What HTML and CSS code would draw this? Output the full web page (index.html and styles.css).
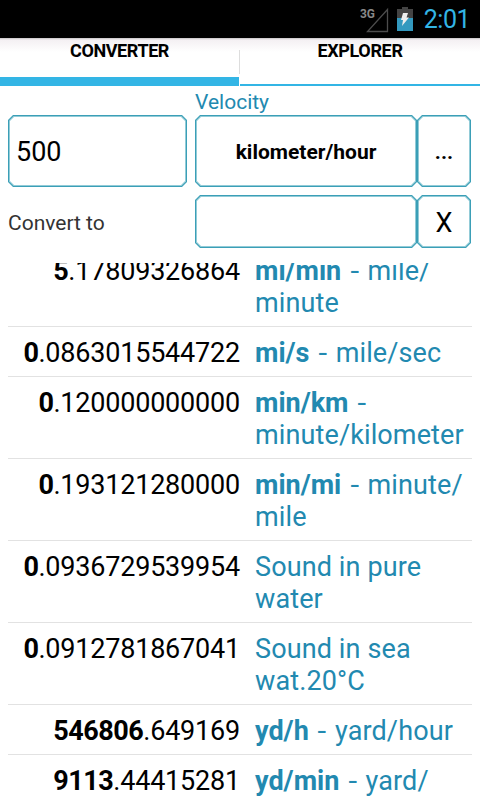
FILE: index.html
```html
<!DOCTYPE html>
<html lang="en"><head><meta charset="utf-8"><title>Converter</title><link rel="stylesheet" href="styles.css"></head>
<body>
<header class="status"><svg class="signal" width="30" height="28" viewBox="0 0 30 28"><path d="M27.5 3.500V25.500H7.500Z" fill="none" stroke="#4d4d4d" stroke-width="1.3"/><text class="network" x="0" y="12" textLength="15" lengthAdjust="spacingAndGlyphs">3G</text></svg>
<svg class="battery" width="16" height="24" viewBox="0 0 16 24"><path d="M5 0h6v2h5v10H0V2h5z" fill="#444"/><path d="M0 11h16v13H0z" fill="#3399bf"/><path d="M6 6h5L9.500 10.500H12L5 19l1-6H4z" fill="#eee"/></svg><span class="clock">2:01</span></header>
<nav class="tabs"><div class="tab active">CONVERTER</div><div class="divider"></div><div class="tab explorer">EXPLORER</div></nav>
<main>
<section class="form"><div class="category">Velocity</div>
<div class="row source"><div class="box amount"><span>500</span></div><div class="box unit"><span>kilometer/hour</span></div><div class="box action"><span>...</span></div></div>
<div class="row target"><div class="caption">Convert to</div><div class="box unit"></div><div class="box action"><span>X</span></div></div></section>
<section class="results">
<div class="result"><div class="value"><b>5</b>.17809326864</div><div class="name"><b>mi/min</b> <i>-</i> mile/<br>minute</div></div>
<div class="result"><div class="value"><b>0</b>.0863015544722</div><div class="name"><b>mi/s</b> <i>-</i> mile/sec</div></div>
<div class="result"><div class="value"><b>0</b>.120000000000</div><div class="name"><b>min/km</b> <i>-</i><br>minute/kilometer</div></div>
<div class="result"><div class="value"><b>0</b>.193121280000</div><div class="name"><b>min/mi</b> <i>-</i> minute/<br>mile</div></div>
<div class="result"><div class="value"><b>0</b>.0936729539954</div><div class="name">Sound in pure<br>water</div></div>
<div class="result"><div class="value"><b>0</b>.0912781867041</div><div class="name">Sound in sea<br>wat.20°C</div></div>
<div class="result"><div class="value"><b>546806</b>.649169</div><div class="name"><b>yd/h</b> <i>-</i> yard/hour</div></div>
<div class="result"><div class="value"><b>9113</b>.44415281</div><div class="name"><b>yd/min</b> <i>-</i> yard/</div></div>
</section></main></body></html>
```
FILE: styles.css
```css
*{box-sizing:border-box}
body{margin:0;width:480px;height:800px;overflow:hidden;background:#fff;color:#000;font-family:Roboto,sans-serif;display:flex;flex-direction:column}
.status{height:38px;flex:none;background:#000;display:flex;align-items:center;justify-content:flex-end;padding-right:10px}
.signal{margin-top:2px}
.network{font:bold 13px Roboto,sans-serif;fill:#888}
.battery{margin:0 11px 0 7px}
.clock{font-size:25px;line-height:38px;color:#33b5e5;letter-spacing:-.5px;padding-top:2px}
.tabs{height:48px;flex:none;display:flex;background:linear-gradient(#c5c2c4,#f4f0f3 2px,#fff 14px)}
.tab{width:239px;text-align:center;font-size:18px;font-weight:700;line-height:26px;letter-spacing:-.4px;border-bottom:2px solid #33b5e5}
.active{border-bottom-width:9px}
.explorer{width:240px;letter-spacing:-.35px}
.divider{width:1px;height:24px;margin-top:12px;background:#ddd}
main{flex:1;min-height:0;display:flex;flex-direction:column}
.form{height:177px;flex:none;padding:0 9px 0 8px}
.category{height:29px;margin-left:187px;font-size:21px;line-height:32px;color:#2289b0}
.row{display:flex}
.source{height:72px}
.target{height:53px;margin-top:8px}
.box,.box::before,.box::after{--cut:5px;clip-path:polygon(var(--cut) 0,calc(100% - var(--cut)) 0,100% var(--cut),100% calc(100% - var(--cut)),calc(100% - var(--cut)) 100%,var(--cut) 100%,0 calc(100% - var(--cut)),0 var(--cut))}
.box{position:relative;background:#3b9fb7;display:flex;align-items:center;justify-content:center}
.box::before,.box::after{content:"";--cut:4.5px;position:absolute;inset:1px;background:#92cbd7}
.box::after{--cut:4px;inset:2px;background:#fff}
.box span{position:relative;z-index:1;padding-top:2px}
.amount{width:179px;margin-right:8px;justify-content:flex-start;padding-left:8px;font-size:27px}
.unit{width:222px;font-size:21px;font-weight:700}
.action{width:54px;font-size:27px}
.source .action{font-size:21px;font-weight:700}
.caption{width:187px;font-size:21px;line-height:57px;color:#333}
.results{flex:1;min-height:0;overflow:hidden;margin:0 8px}
.result{display:flex;border-bottom:1px solid #e2e2e2;padding:10px 0 7px;font-size:27px;line-height:32px}
.result:first-child{margin-top:-18px}
.value{width:232px;text-align:right;margin-right:15px;flex:none;letter-spacing:-.2px}
.value b{letter-spacing:-.5px}
.name{color:#2289b0;white-space:nowrap;letter-spacing:.12px}
.name b{letter-spacing:0}
.name i{display:inline-block;font-style:normal;margin:0 2.5px;transform:scaleX(1.15)}
```
